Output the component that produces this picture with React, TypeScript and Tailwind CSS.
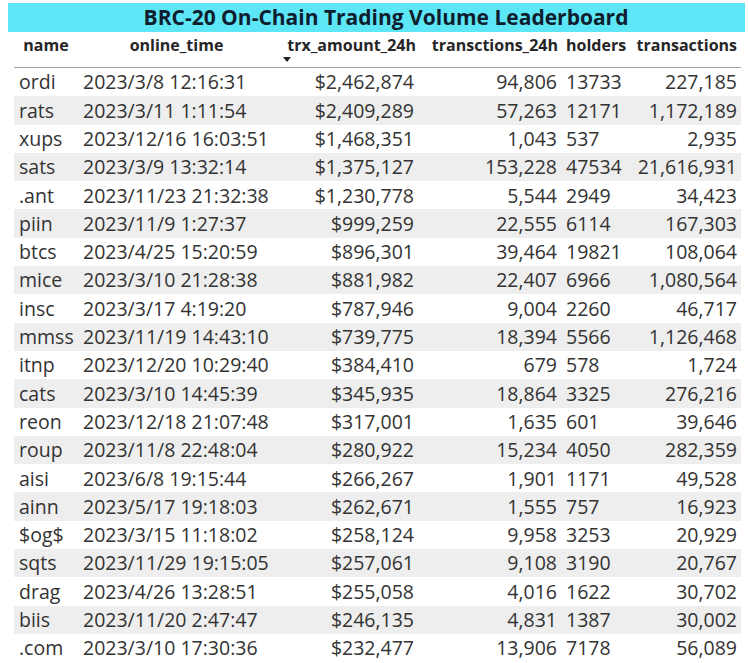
import React from "react";

const rows: [string, string, string, string, string, string][] = [
  ["ordi", "2023/3/8 12:16:31", "$2,462,874", "94,806", "13733", "227,185"],
  ["rats", "2023/3/11 1:11:54", "$2,409,289", "57,263", "12171", "1,172,189"],
  ["xups", "2023/12/16 16:03:51", "$1,468,351", "1,043", "537", "2,935"],
  ["sats", "2023/3/9 13:32:14", "$1,375,127", "153,228", "47534", "21,616,931"],
  [".ant", "2023/11/23 21:32:38", "$1,230,778", "5,544", "2949", "34,423"],
  ["piin", "2023/11/9 1:27:37", "$999,259", "22,555", "6114", "167,303"],
  ["btcs", "2023/4/25 15:20:59", "$896,301", "39,464", "19821", "108,064"],
  ["mice", "2023/3/10 21:28:38", "$881,982", "22,407", "6966", "1,080,564"],
  ["insc", "2023/3/17 4:19:20", "$787,946", "9,004", "2260", "46,717"],
  ["mmss", "2023/11/19 14:43:10", "$739,775", "18,394", "5566", "1,126,468"],
  ["itnp", "2023/12/20 10:29:40", "$384,410", "679", "578", "1,724"],
  ["cats", "2023/3/10 14:45:39", "$345,935", "18,864", "3325", "276,216"],
  ["reon", "2023/12/18 21:07:48", "$317,001", "1,635", "601", "39,646"],
  ["roup", "2023/11/8 22:48:04", "$280,922", "15,234", "4050", "282,359"],
  ["aisi", "2023/6/8 19:15:44", "$266,267", "1,901", "1171", "49,528"],
  ["ainn", "2023/5/17 19:18:03", "$262,671", "1,555", "757", "16,923"],
  ["$og$", "2023/3/15 11:18:02", "$258,124", "9,958", "3253", "20,929"],
  ["sqts", "2023/11/29 19:15:05", "$257,061", "9,108", "3190", "20,767"],
  ["drag", "2023/4/26 13:28:51", "$255,058", "4,016", "1622", "30,702"],
  ["biis", "2023/11/20 2:47:47", "$246,135", "4,831", "1387", "30,002"],
  [".com", "2023/3/10 17:30:36", "$232,477", "13,906", "7178", "56,089"],
];

const cols = "grid grid-cols-[64px_197px_143px_143px_69px_111px]";

export default function App() {
  return (
    <div
      className="w-[748px] h-[663px] bg-white overflow-hidden pt-[3px]"
      style={{ fontFamily: '"Open Sans", "Noto Sans", sans-serif' }}
    >
      <div className="ml-[8px] w-[737px] h-[29px] bg-[#5de6f6] flex items-center justify-center pl-[19px]">
        <span className="text-[21px] font-bold text-[#0f1e2e] leading-none whitespace-nowrap">
          BRC-20 On-Chain Trading Volume Leaderboard
        </span>
      </div>
      <div className="ml-[14px] w-[727px]">
        <div className={`${cols} h-[36px] border-b-[1.5px] border-[#9aa6b2] text-[16px] font-bold text-[#262626] leading-none whitespace-nowrap`}>
          <div className="text-center pt-[5px]">name</div>
          <div className="text-center pt-[5px]">online_time</div>
          <div className="relative text-right pr-[2px] pt-[5px]">
            trx_amount_24h
            <svg className="absolute left-[8px] top-[25px]" width="8" height="5" viewBox="0 0 8 5">
              <polygon points="0,0 8,0 4,5" fill="#222" />
            </svg>
          </div>
          <div className="text-right pr-[3px] pt-[5px]">transctions_24h</div>
          <div className="text-left pl-[5px] pt-[5px]">holders</div>
          <div className="text-right pr-[4px] pt-[5px]">transactions</div>
        </div>
        {rows.map((r, i) => (
          <div
            key={i}
            className={`${cols} h-[28.3px] items-center text-[19.5px] leading-none text-[#333333] whitespace-nowrap ${
              i % 2 === 1 ? "bg-[#eeeeee]" : "bg-white"
            }`}
          >
            <div className="pl-[5px]">{r[0]}</div>
            <div className="pl-[5px]">{r[1]}</div>
            <div className="text-right pr-[4px]">{r[2]}</div>
            <div className="text-right pr-[4px]">{r[3]}</div>
            <div className="pl-[5px]">{r[4]}</div>
            <div className="text-right pr-[4px]">{r[5]}</div>
          </div>
        ))}
      </div>
    </div>
  );
}
